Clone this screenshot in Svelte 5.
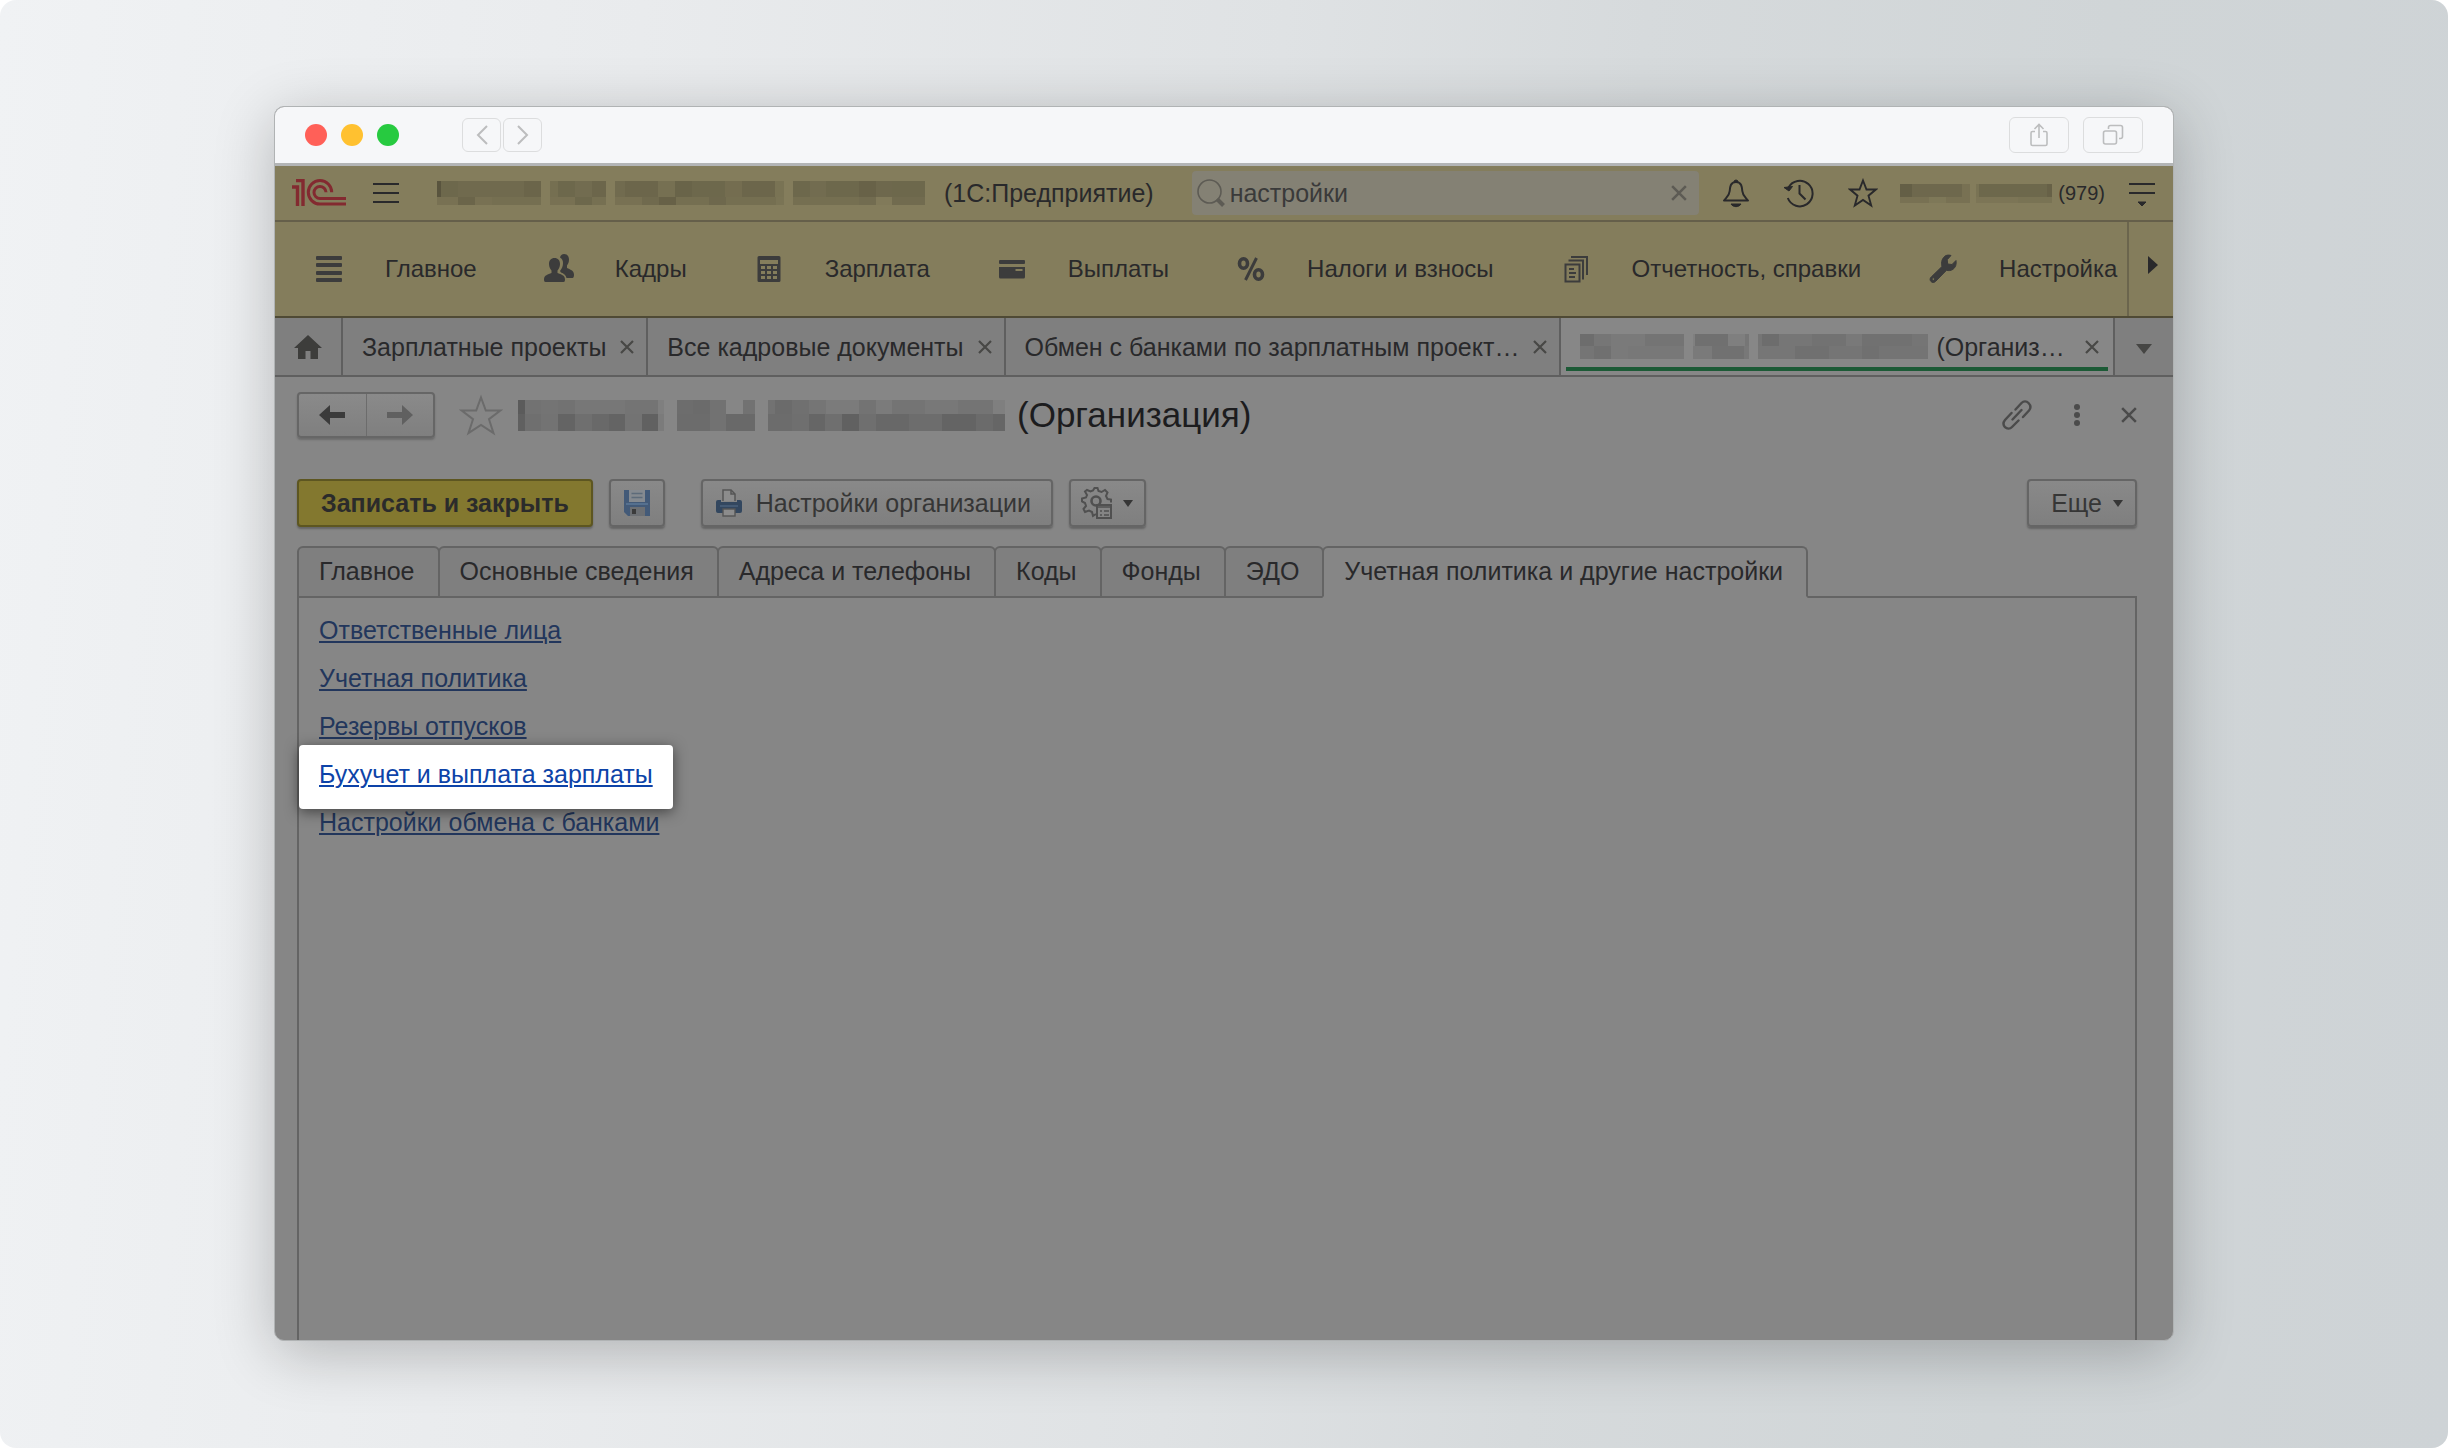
<script>
	let query = $state('настройки');
	let activeSection = $state(6);

	const menu = [
		{ icon: 'list', label: 'Главное' },
		{ icon: 'people', label: 'Кадры' },
		{ icon: 'calc', label: 'Зарплата' },
		{ icon: 'card', label: 'Выплаты' },
		{ icon: 'percent', label: 'Налоги и взносы' },
		{ icon: 'docs', label: 'Отчетность, справки' },
		{ icon: 'wrench', label: 'Настройка' }
	];

	const openTabs = ['Зарплатные проекты', 'Все кадровые документы', 'Обмен с банками по зарплатным проект…'];

	const sections = [
		'Главное',
		'Основные сведения',
		'Адреса и телефоны',
		'Коды',
		'Фонды',
		'ЭДО',
		'Учетная политика и другие настройки'
	];

	const links = [
		{ label: 'Ответственные лица' },
		{ label: 'Учетная политика' },
		{ label: 'Резервы отпусков' },
		{ label: 'Бухучет и выплата зарплаты', highlighted: true },
		{ label: 'Настройки обмена с банками' }
	];

	// Hidden names: each block has two rows of [width, darkness %]
	const baseName = [
		[[[4, 32], [17, 17], [66, 15], [17, 19]], [[21, 9], [17, 19], [17, 9], [49, 11]]],
		[[[8, 11], [17, 17], [17, 13], [14, 18]], [[25, 9], [17, 17], [14, 10]]],
		[[[10, 14], [33, 18], [17, 10], [17, 20], [33, 17], [17, 12], [33, 18], [9, 8]], [[27, 9], [17, 15], [17, 22], [33, 11], [17, 16], [50, 11], [8, 7]]],
		[[[17, 17], [16, 13], [33, 17], [17, 21], [16, 16], [33, 17]], [[66, 11], [17, 13], [16, 2], [33, 14]]]
	];
	const userName = [
		[[[12, 24], [50, 16], [8, 9]], [[29, 9], [17, 4], [24, 9]]],
		[[[3, 8], [68, 17], [5, 22]], [[42, 6], [34, 8]]]
	];
	const tabName = [
		[[[14, 19], [17, 12], [34, 9], [39, 14]], [[14, 13], [17, 17], [17, 9], [56, 11]]],
		[[[2, 5], [33, 17], [17, 6], [4, 12]], [[19, 9], [32, 16], [5, 11]]],
		[[[4, 13], [17, 19], [33, 12], [34, 15], [16, 10], [50, 16], [16, 13]], [[37, 12], [34, 17], [33, 13], [17, 17], [49, 14]]]
	];
	const orgName = [
		[[[7, 32], [16, 15], [17, 13], [17, 15], [50, 11], [33, 13], [6, 5]], [[7, 28], [16, 17], [17, 14], [17, 25], [17, 17], [17, 21], [16, 25], [17, 14], [16, 27], [6, 8]]],
		[[[16, 18], [17, 20], [16, 15], [17, 0], [12, 15]], [[33, 19], [16, 15], [29, 21]]],
		[[[7, 15], [17, 20], [17, 16], [17, 12], [33, 8], [17, 14], [16, 8], [33, 13], [33, 10], [35, 13], [12, 5]], [[24, 19], [17, 17], [16, 24], [17, 17], [17, 27], [17, 17], [33, 22], [33, 18], [34, 25], [17, 20], [12, 24]]]
	];

	function cells(row) {
		let x = 0;
		return row.map(([w, dark]) => {
			const cell = { x, w, dark: dark / 100 };
			x += w;
			return cell;
		});
	}

	function rowWidth(row) {
		return row.reduce((sum, [w]) => sum + w, 0);
	}
</script>

{#snippet mosaic(blocks, height, split)}
	{#each blocks as block}
		<svg class="mosaic" width={rowWidth(block[0])} {height} shape-rendering="crispEdges" aria-hidden="true">
			{#each cells(block[0]) as c}
				<rect x={c.x} y="0" width={c.w} height={split} fill-opacity={c.dark} />
			{/each}
			{#each cells(block[1]) as c}
				<rect x={c.x} y={split} width={c.w} height={height - split} fill-opacity={c.dark} />
			{/each}
		</svg>
	{/each}
{/snippet}

{#snippet cross(size)}
	<svg width={size} height={size} viewBox="0 0 14 14" fill="none" stroke="currentColor" stroke-width="2.2">
		<path d="M1 1l12 12M13 1L1 13" />
	</svg>
{/snippet}

{#snippet menuIcon(name)}
	<svg class="menu-icon" width="32" height="32" viewBox="0 0 32 32" fill="currentColor">
		{#if name === 'list'}
			<rect x="3" y="3" width="26" height="4" rx="1" />
			<rect x="3" y="10" width="26" height="4" rx="1" />
			<rect x="3" y="18" width="26" height="4" rx="1" />
			<rect x="3" y="25" width="26" height="4" rx="1" />
		{:else if name === 'people'}
			<path d="M21 1c3.500 0 5 2.500 5 5.500 0 3-1 4.500-2 6v2.500c3 1.500 7 2.500 7 6.500 0 2-.5 3.500-1.500 3.500h-6c-.5-3-3-4.500-5.500-5.500l-1-1.500c2-2.500 3-5 3-8 0-2.500-1-4.500-3-5.500.5-2 2-3.500 4-3.500z" />
			<path d="M11.500 5c3.500 0 5.500 2.500 5.500 6 0 3-1.200 5-2.500 6.500v2.500c3.500 1.500 7.500 2 7.500 6.500 0 1.700-.5 2.500-1.500 2.500h-18C1.500 29 1 28.200 1 26.500 1 22 5 21.500 8.500 20v-2.500C7.200 16 6 14 6 11c0-3.500 2-6 5.500-6z" />
		{:else if name === 'calc'}
			<path fill-rule="evenodd" d="M6 3h20a1.500 1.500 0 0 1 1.500 1.500v23A1.500 1.500 0 0 1 26 29H6a1.500 1.500 0 0 1-1.500-1.500v-23A1.500 1.500 0 0 1 6 3zM7 7v4h18V7zM8 13v3h4v-3zM14 13v3h4v-3zM20 13v3h4v-3zM8 18v3h4v-3zM14 18v3h4v-3zM20 18v3h4v-3zM8 23v3h4v-3zM14 23v3h4v-3zM20 23v3h4v-3z" />
		{:else if name === 'card'}
			<rect x="3" y="7" width="26" height="4" rx="1" />
			<path fill-rule="evenodd" d="M3 14h26v10a1.500 1.500 0 0 1-1.500 1.500h-23A1.500 1.500 0 0 1 3 24zM19.500 16v2h7v-2z" />
		{:else if name === 'percent'}
			<g fill="none" stroke="currentColor" stroke-width="3.600">
				<ellipse cx="8.500" cy="10.500" rx="4" ry="4.800" />
				<ellipse cx="23.500" cy="21.500" rx="4" ry="4.800" />
				<path d="M21.500 5L10.500 27" stroke-width="3" />
			</g>
		{:else if name === 'docs'}
			<g fill="none" stroke="currentColor" stroke-width="2">
				<path d="M5.500 11.500h14v17h-14zM8.500 7.500h14.500v19M11 4h16v18" />
				<path d="M9 16h5M9 20h7M9 24h6" />
			</g>
		{:else}
			<path fill-rule="evenodd" d="M19 2.500c2-.6 3.500-.5 5 0l-3.800 4.200.5 4.300 4.300.5 4-4c.7 4-.5 7-3 8.800-2 1.500-4.500 1.500-6.500 1L8.500 28.500c-1.300 1.300-3.300 1.300-4.500 0-1.300-1.300-1.200-3.300.2-4.500L15 13.500c-1.200-4.500.2-9 4-11zM6.300 24.800a1.300 1.300 0 1 0 0 2.600 1.300 1.300 0 0 0 0-2.600z" stroke="currentColor" />
		{/if}
	</svg>
{/snippet}

<div class="page">
	<div class="window">
		<header class="titlebar">
			<div class="lights">
				<span class="light red"></span>
				<span class="light yellow"></span>
				<span class="light green"></span>
			</div>
			<div class="history">
				<button class="chrome-btn small" aria-label="Назад">
					<svg width="14" height="22" viewBox="0 0 14 22" fill="none" stroke="currentColor" stroke-width="2"><path d="M12 2L3 11l9 9" /></svg>
				</button>
				<button class="chrome-btn small" aria-label="Вперед">
					<svg width="14" height="22" viewBox="0 0 14 22" fill="none" stroke="currentColor" stroke-width="2"><path d="M2 2l9 9-9 9" /></svg>
				</button>
			</div>
			<div class="chrome-actions">
				<button class="chrome-btn" aria-label="Поделиться">
					<svg width="22" height="24" viewBox="0 0 22 24" fill="none" stroke="currentColor" stroke-width="1.600">
						<path d="M7 8.500H4.500a1.500 1.500 0 0 0-1.500 1.500v11a1.500 1.500 0 0 0 1.500 1.500h13a1.500 1.500 0 0 0 1.500-1.500v-11a1.500 1.500 0 0 0-1.500-1.500H15M11 15V1.500M6.500 6L11 1.500 15.500 6" />
					</svg>
				</button>
				<button class="chrome-btn" aria-label="Вкладки">
					<svg width="22" height="22" viewBox="0 0 22 22" fill="none" stroke="currentColor" stroke-width="1.600">
						<rect x="1.500" y="7" width="13" height="13" rx="2" />
						<path d="M6.500 5V3.500a2 2 0 0 1 2-2h10a2 2 0 0 1 2 2v9a2 2 0 0 1-2 2H17" />
					</svg>
				</button>
			</div>
		</header>

		<div class="app">
			<div class="topbar">
				<svg class="logo" width="55" height="28" viewBox="0 0 55 28" fill="none" stroke="currentColor" stroke-width="3" role="img" aria-label="1С">
					<path d="M4 1.500h7v25.500M0 8h5.500v19" stroke-width="3.400" />
					<path d="M39.700 13.300A11.700 11.700 0 1 0 28 25H54" />
					<path d="M34 13.300A6 6 0 1 0 28 19.500H54" />
				</svg>
				<button class="icon-btn burger" aria-label="Меню">
					<svg width="28" height="24" viewBox="0 0 28 24" stroke="currentColor" stroke-width="2"><path d="M1 3h26M1 12h26M1 21h26" /></svg>
				</button>
				<div class="base-name">
					{@render mosaic(baseName, 24, 16)}
				</div>
				<span>(1С:Предприятие)</span>
				<label class="search">
					<svg width="28" height="28" viewBox="0 0 28 28" fill="none" stroke="currentColor">
						<circle cx="12.500" cy="12.500" r="11.500" stroke-width="1.600" />
						<path d="M20 20l6.500 6.500" stroke-width="4" />
					</svg>
					<input type="text" bind:value={query} aria-label="Поиск" />
					<button class="icon-btn clear" aria-label="Очистить" onclick={() => (query = '')}>
						{@render cross(16)}
					</button>
				</label>
				<div class="tools">
					<button class="icon-btn" aria-label="Уведомления">
						<svg width="28" height="30" viewBox="0 0 28 30" fill="none" stroke="currentColor" stroke-width="2" stroke-linejoin="round">
							<path d="M14 4C8.500 4 8 9 7.700 13c-.3 4.500-3 6-5.700 9.500h24C23.300 19 20.600 17.500 20.300 13 20 9 19.500 4 14 4z" />
							<path d="M12 4a2 2 0 0 1 4 0zM9 26h10c-2 3.500-8 3.500-10 0z" fill="currentColor" stroke-width="1" />
						</svg>
					</button>
					<button class="icon-btn" aria-label="История">
						<svg width="30" height="30" viewBox="0 0 30 30" fill="none" stroke="currentColor" stroke-width="2">
							<path d="M4.500 9.500A12.800 12.800 0 1 1 3.800 20M15.500 7v8.500l6 6" />
							<path d="M0 9.500l8.500-1L5 13z" fill="currentColor" stroke-width="1" />
						</svg>
					</button>
					<button class="icon-btn" aria-label="Избранное">
						<svg width="30" height="30" viewBox="0 0 30 30" fill="none" stroke="currentColor" stroke-width="1.900">
							<path d="M15 2.500l3.500 9h9.300l-7.300 6.200 2.700 9.800L15 22l-8.200 5.500 2.700-9.800L2.200 11.500h9.300z" />
						</svg>
					</button>
				</div>
				<div class="user">
					{@render mosaic(userName, 19, 13)}
					<span>(979)</span>
				</div>
				<button class="icon-btn" aria-label="Настройки окна">
					<svg width="28" height="28" viewBox="0 0 28 28" stroke="currentColor" stroke-width="2">
						<path d="M1 5h26M1 14h26" />
						<path d="M10 23h8l-4 4z" fill="currentColor" stroke-width="1" />
					</svg>
				</button>
			</div>

			<div class="menu">
				<nav>
					{#each menu as item}
						<button class="menu-item">
							{@render menuIcon(item.icon)}
							{item.label}
						</button>
					{/each}
				</nav>
				<button class="menu-next" aria-label="Далее">
					<svg width="10" height="18" viewBox="0 0 10 18" fill="currentColor"><path d="M0 0l10 9-10 9z" /></svg>
				</button>
			</div>

			<div class="open-tabs">
				<button class="home" aria-label="Начальная страница">
					<svg width="28" height="24" viewBox="0 0 28 24" fill="currentColor">
						<path d="M14 0l14 13h-4v11h-7.500v-8h-5v8H4V13H0z" />
					</svg>
				</button>
				{#each openTabs as tab}
					<div class="open-tab">
						<span>{tab}</span>
						<button class="icon-btn" aria-label="Закрыть">{@render cross(14)}</button>
					</div>
				{/each}
				<div class="open-tab current">
					<div class="tab-name">{@render mosaic(tabName, 25, 12)}</div>
					<span>(Организ…</span>
					<button class="icon-btn" aria-label="Закрыть">{@render cross(14)}</button>
				</div>
				<button class="more-tabs" aria-label="Все вкладки">
					<svg width="16" height="10" viewBox="0 0 16 10" fill="currentColor"><path d="M0 0h16L8 10z" /></svg>
				</button>
			</div>

			<main>
				<div class="heading">
					<div class="steps">
						<button aria-label="Назад">
							<svg width="26" height="20" viewBox="0 0 26 20" fill="currentColor"><path d="M0 10L11 0v7h15v6H11v7z" /></svg>
						</button>
						<button class="muted" aria-label="Вперед">
							<svg width="26" height="20" viewBox="0 0 26 20" fill="currentColor"><path d="M26 10L15 0v7H0v6h15v7z" /></svg>
						</button>
					</div>
					<button class="icon-btn favorite" aria-label="В избранное">
						<svg width="44" height="42" viewBox="0 0 44 42" fill="none" stroke="currentColor" stroke-width="2">
							<path d="M22 3.500l4.800 13h14.500L30 25.200l4.500 14L22 31l-12.500 8.200 4.500-14L2.700 16.500h14.500z" />
						</svg>
					</button>
					<h1>
						<span class="org-name">{@render mosaic(orgName, 31, 14)}</span>
						(Организация)
					</h1>
					<div class="heading-tools">
						<button class="icon-btn" aria-label="Ссылка">
							<svg width="32" height="32" viewBox="0 0 32 32" fill="none" stroke="currentColor" stroke-width="2.400" stroke-linecap="round">
								<path d="M14.500 10.500l6-6.500c2-2 5-2 7 0s2.500 5 .5 7.500l-6 6.500M10.500 14l-6.500 7c-2 2.500-1.800 5.200 0 7.200 2 2 5 1.900 7-.2l6.500-6.500M11.500 20.500l9-9.500" />
							</svg>
						</button>
						<button class="icon-btn" aria-label="Еще действия">
							<svg width="6" height="22" viewBox="0 0 6 22" fill="currentColor">
								<circle cx="3" cy="3" r="3" /><circle cx="3" cy="11" r="3" /><circle cx="3" cy="19" r="3" />
							</svg>
						</button>
						<button class="icon-btn" aria-label="Закрыть">{@render cross(16)}</button>
					</div>
				</div>

				<div class="commands">
					<button class="btn primary">Записать и закрыть</button>
					<button class="btn square" aria-label="Записать">
						<svg width="28" height="28" viewBox="0 0 28 28">
							<path d="M1 1h26v26H5l-4-4z" fill="#435a78" />
							<rect x="6" y="1" width="16" height="12" fill="#858a90" />
							<path d="M8.500 4.500h11M8.500 8.500h11" stroke="#5d6b7a" stroke-width="1.600" />
							<rect x="3" y="14" width="22" height="2" fill="#55708f" />
							<rect x="7" y="18" width="15" height="9" fill="#6c6f73" />
							<rect x="9" y="20" width="4" height="5" fill="#3b3b3b" />
						</svg>
					</button>
					<button class="btn print">
						<svg width="28" height="28" viewBox="0 0 28 28">
							<path d="M8 12V1h8l4 4v7" fill="#8c8c8c" stroke="#555" stroke-width="1.500" />
							<path d="M16 1v4h4" fill="none" stroke="#555" stroke-width="1.500" />
							<path d="M3 11h3v2h16v-2h3a2 2 0 0 1 2 2v9a2 2 0 0 1-2 2H3a2 2 0 0 1-2-2v-9a2 2 0 0 1 2-2z" fill="#33475f" />
							<path d="M5 17h18" stroke="#4c637e" stroke-width="1.400" />
							<rect x="8" y="20" width="12" height="7" fill="#8c8c8c" stroke="#555" stroke-width="1.400" />
						</svg>
						Настройки организации
					</button>
					<button class="btn gear" aria-label="Печать и настройки">
						<svg width="32" height="32" viewBox="0 0 32 32" fill="none" stroke="#505050" stroke-width="2">
							<path d="M15 27l-3 2-1-4-3-1.500-4 1.500-1.500-3 2.500-3-1-3-3-1.500v-3l4-1 1-2.500-2-3.500L6 3l3.500 1.500L12 3.500 13.500 1h3l1 3 3 1L24 3l2.500 2.500-1.500 3.500 1.500 3 3.500.5v3" />
							<circle cx="15" cy="14" r="4.500" stroke-width="2.600" />
							<rect x="16" y="18" width="14" height="13" fill="#848484" />
							<path d="M16 20h14M19 24h2M23 24h5M19 28h2M23 28h5" stroke-width="1.500" />
						</svg>
						<svg width="10" height="7" viewBox="0 0 10 7" fill="currentColor"><path d="M0 0h10L5 7z" /></svg>
					</button>
					<button class="btn more">
						Еще
						<svg width="10" height="7" viewBox="0 0 10 7" fill="currentColor"><path d="M0 0h10L5 7z" /></svg>
					</button>
				</div>

				<div class="sections" role="tablist">
					{#each sections as section, i}
						<button role="tab" aria-selected={activeSection === i} class:active={activeSection === i} onclick={() => (activeSection = i)}>
							{section}
						</button>
					{/each}
				</div>

				<div class="panel">
					<ul>
						{#each links as link}
							<li class:highlighted={link.highlighted}><a href="#settings">{link.label}</a></li>
						{/each}
					</ul>
				</div>
			</main>
		</div>
	</div>
</div>

<style>
	:global(body) {
		background: #fff;
	}

	.page {
		display: flex;
		box-sizing: border-box;
		min-height: 100vh;
		padding: 106px 274px 107px;
		border-radius: 16px;
		background: linear-gradient(95deg, #f0f2f4 0%, #e9ebed 25%, #dfe2e4 50%, #d6dadc 64%, #d0d5d7 82%, #ced3d6 100%);
		font-family: "Liberation Sans", Arial, sans-serif;
		font-size: 25px;
		line-height: 28px;
		color: #29292b;
	}

	.window {
		display: flex;
		flex: 1;
		flex-direction: column;
		min-width: 0;
		border: 1px solid #b0b3b4;
		border-radius: 10px;
		overflow: hidden;
		background: #868686;
		box-shadow: 0 12px 60px rgba(0, 0, 0, 0.24);
	}

	button {
		margin: 0;
		padding: 0;
		border: 0;
		background: none;
		color: inherit;
		font: inherit;
		cursor: pointer;
	}

	svg {
		display: block;
		flex: none;
	}

	.icon-btn {
		display: flex;
		align-items: center;
		justify-content: center;
	}

	.titlebar {
		display: flex;
		align-items: center;
		height: 56px;
		padding: 0 30px;
		border-bottom: 3px solid #b3b5b6;
		background: #f6f7f9;
	}

	.lights {
		display: flex;
		gap: 14px;
	}

	.light {
		width: 22px;
		height: 22px;
		border-radius: 50%;
	}

	.red { background: #ff6058; }
	.yellow { background: #ffc130; }
	.green { background: #27ca40; }

	.history {
		display: flex;
		gap: 2px;
		margin-left: 63px;
	}

	.chrome-actions {
		display: flex;
		gap: 14px;
		margin-left: auto;
	}

	.chrome-btn {
		display: flex;
		align-items: center;
		justify-content: center;
		box-sizing: border-box;
		width: 60px;
		height: 36px;
		border: 1px solid #dcddde;
		border-radius: 6px;
		color: #bcbdbe;
	}

	.chrome-btn.small {
		width: 39px;
		height: 34px;
	}

	.app {
		display: flex;
		flex: 1;
		flex-direction: column;
	}

	.topbar {
		display: flex;
		align-items: center;
		height: 54px;
		padding: 0 17px;
		border-bottom: 2px solid #655f4a;
		background: #847d5c;
		white-space: nowrap;
	}

	.logo {
		color: #832a30;
	}

	.burger {
		margin: 0 37px 0 25px;
	}

	.base-name,
	.tab-name {
		display: flex;
		gap: 9px;
	}

	.base-name {
		margin-right: 19px;
	}

	.search {
		display: flex;
		flex: 1;
		align-items: center;
		gap: 5px;
		min-width: 0;
		height: 44px;
		margin-left: 38px;
		padding: 0 12px 0 5px;
		border-radius: 4px;
		background: #848174;
		color: #5d5b54;
	}

	.search input {
		flex: 1;
		min-width: 0;
		padding: 0;
		border: 0;
		outline: 0;
		background: none;
		color: #3a3a3a;
		font: inherit;
	}

	.tools {
		display: flex;
		align-items: center;
		gap: 34px;
		margin: 0 22px 0 23px;
	}

	.user {
		display: flex;
		align-items: center;
		gap: 6px;
		margin-right: 23px;
		font-size: 20px;
	}

	.menu {
		display: flex;
		height: 94px;
		border-bottom: 2px solid #4f4a35;
		background: #847d5c;
	}

	nav {
		display: flex;
		flex: 1;
		gap: 66px;
		min-width: 0;
		padding-left: 38px;
		overflow: hidden;
	}

	.menu-item {
		display: flex;
		flex: none;
		align-items: center;
		gap: 40px;
		font-size: 24px;
		white-space: nowrap;
	}

	.menu-icon {
		color: #3c3c3c;
	}

	.menu-next {
		display: flex;
		align-items: center;
		box-sizing: border-box;
		width: 46px;
		padding: 0 0 8px 19px;
		border-left: 2px solid #6b654d;
	}

	.open-tabs {
		display: flex;
		height: 57px;
		border-bottom: 2px solid #5f5f5f;
		background: #7f7f7f;
		white-space: nowrap;
	}

	.home {
		display: flex;
		align-items: center;
		justify-content: center;
		width: 68px;
		border-right: 2px solid #5f5f5f;
		color: #3d3d3b;
	}

	.open-tab {
		display: flex;
		align-items: center;
		gap: 14px;
		padding: 0 12px 0 19px;
		border-right: 2px solid #5f5f5f;
	}

	.open-tab .icon-btn {
		color: #484846;
	}

	.current {
		position: relative;
		flex: 1;
		gap: 8px;
		padding-right: 14px;
		background: #878787;
	}

	.current .icon-btn {
		margin-left: auto;
	}

	.current::after {
		content: "";
		position: absolute;
		right: 5px;
		bottom: 4px;
		left: 5px;
		height: 4px;
		background: #1c5a36;
	}

	.more-tabs {
		display: flex;
		align-items: center;
		justify-content: center;
		width: 58px;
		padding-top: 4px;
		color: #464644;
	}

	main {
		display: flex;
		flex: 1;
		flex-direction: column;
		padding: 15px 36px 0 22px;
	}

	.heading {
		display: flex;
		align-items: center;
		height: 46px;
	}

	.steps {
		display: flex;
		box-sizing: border-box;
		width: 138px;
		height: 46px;
		border: 2px solid #666;
		border-radius: 4px;
		background: linear-gradient(#8a8a8a, #7f7f7f);
		box-shadow: 0 2px 2px rgba(0, 0, 0, 0.2);
		color: #3b3b3b;
	}

	.steps button {
		display: flex;
		flex: 1;
		align-items: center;
		justify-content: center;
	}

	.steps .muted {
		border-left: 1px solid #6c6c6c;
		color: #606060;
	}

	.favorite {
		margin: 0 15px 0 24px;
		color: #6b6b6b;
	}

	h1 {
		display: flex;
		align-items: center;
		gap: 12px;
		margin: 0;
		font-size: 35px;
		font-weight: normal;
		line-height: 40px;
		color: #1c1c1e;
		white-space: nowrap;
	}

	.org-name {
		display: flex;
		gap: 13px;
	}

	.heading-tools {
		display: flex;
		align-items: center;
		gap: 41px;
		margin-left: auto;
		color: #4b4b4b;
	}

	.commands {
		display: flex;
		gap: 16px;
		margin-top: 41px;
	}

	.btn {
		display: flex;
		align-items: center;
		box-sizing: border-box;
		height: 48px;
		padding: 0 22px;
		border: 2px solid #656565;
		border-radius: 4px;
		background: linear-gradient(#898989, #7f7f7f);
		box-shadow: 0 2px 2px rgba(0, 0, 0, 0.25);
		color: #363636;
		white-space: nowrap;
	}

	.primary {
		border-color: #5d5621;
		background: #83782f;
		color: #2b2b2b;
		font-weight: bold;
	}

	.square {
		padding: 0 12px;
	}

	.print {
		gap: 13px;
		margin-left: 20px;
		padding: 0 20px 0 12px;
	}

	.gear {
		gap: 10px;
		padding: 0 11px 0 10px;
	}

	.more {
		gap: 11px;
		margin-left: auto;
		padding-right: 12px;
	}

	.sections {
		display: flex;
		margin-top: 19px;
	}

	.sections button {
		position: relative;
		z-index: 1;
		box-sizing: border-box;
		height: 52px;
		margin-right: -2px;
		padding: 0 23px 2px 20px;
		border: 2px solid #646464;
		border-radius: 6px 6px 0 0;
		background: #7f7f7f;
		white-space: nowrap;
	}

	.sections button.active {
		border-bottom-color: #868686;
		background: #868686;
	}

	.panel {
		flex: 1;
		margin-top: -2px;
		border: 2px solid #646464;
		border-bottom: 0;
	}

	ul {
		display: flex;
		flex-direction: column;
		align-items: flex-start;
		margin: 0;
		padding: 8px 0;
		list-style: none;
	}

	li {
		height: 48px;
		padding: 0 20px;
		line-height: 48px;
	}

	li a {
		color: #22365c;
		text-decoration-thickness: 2px;
		text-underline-offset: 2px;
	}

	/* the spotlight covers a little of the rows around it */
	.highlighted {
		position: relative;
		height: 64px;
		margin: -5px 0 -11px;
		padding-right: 20px;
		border-radius: 4px;
		background: #fff;
		box-shadow: 0 3px 14px rgba(0, 0, 0, 0.5);
		line-height: 58px;
	}

	.highlighted a {
		color: #0d43a8;
	}
</style>
